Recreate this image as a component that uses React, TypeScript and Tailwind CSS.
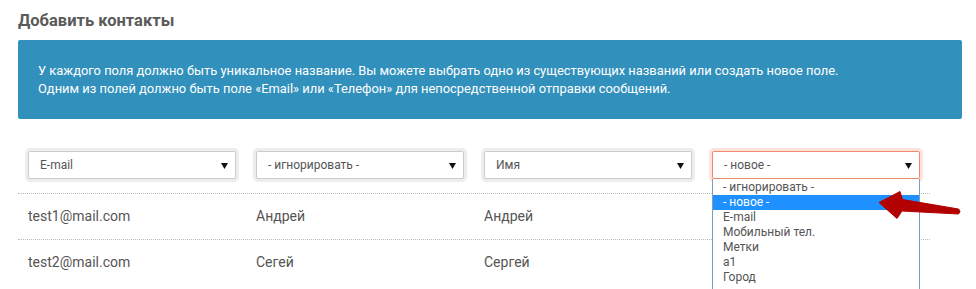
import React from 'react';

const columns = ['E-mail', '- игнорировать -', 'Имя', '- новое -'];

const rows = [
  ['test1@mail.com', 'Андрей', 'Андрей', ''],
  ['test2@mail.com', 'Сегей', 'Сергей', ''],
];

const options = ['- игнорировать -', '- новое -', 'E-mail', 'Мобильный тел.', 'Метки', 'а1', 'Город'];

function Caret() {
  return (
    <svg width="7" height="7" viewBox="0 0 7 7" className="shrink-0">
      <path d="M0 1 L7 1 L3.5 7 Z" fill="#111" />
    </svg>
  );
}

function FakeSelect({ value, active }: { value: string; active?: boolean }) {
  return (
    <div
      className={
        'flex h-[28px] w-[208px] items-center justify-between rounded-[2px] border bg-white pl-[11px] pr-[7px] text-[12px] text-[#555] ' +
        (active
          ? 'border-[#f08a70] shadow-[0_0_0_3px_#fde3db]'
          : 'border-[#c9ccce] shadow-[0_0_0_3px_#ededed]')
      }
    >
      <span>{value}</span>
      <Caret />
    </div>
  );
}

function Arrow() {
  return (
    <svg
      className="absolute left-[870px] top-[185px]"
      width="100"
      height="40"
      viewBox="0 0 100 40"
    >
      <path
        d="M9 17.5 L30 6.5 L32.5 14.5 L88.5 24 Q91.5 26.5 88.5 29 L32 26 L27 33.5 Z"
        fill="#b30000"
        stroke="#b30000"
        strokeWidth="1"
        strokeLinejoin="round"
      />
    </svg>
  );
}

export default function App() {
  return (
    <div
      className="relative h-[289px] w-[976px] overflow-hidden bg-white px-[18px]"
      style={{ fontFamily: 'Roboto, "Noto Sans", sans-serif' }}
    >
      <h2 className="pt-[9px] text-[16.5px] font-bold leading-[24px] text-[#5a5a5a]">Добавить контакты</h2>

      <div className="mt-[7px] h-[79px] w-[944px] rounded-[2px] bg-[#3190bc] px-[20px] pt-[22px] text-[12.9px] leading-[18px] text-white">
        <p>
          У каждого поля должно быть уникальное название. Вы можете выбрать одно из существующих названий или
          создать новое поле.
        </p>
        <p>Одним из полей должно быть поле «Email» или «Телефон» для непосредственной отправки сообщений.</p>
      </div>

      <div className="w-[912px]">
        <div className="grid grid-cols-4 border-b border-dotted border-[#bdbdbd] pb-[14px] pt-[32px]">
          {columns.map((c, i) => (
            <div key={c} className="pl-[10px]">
              <FakeSelect value={c} active={i === 3} />
            </div>
          ))}
        </div>
        {rows.map((r, ri) => (
          <div
            key={ri}
            className={
              'grid h-[46px] grid-cols-4 items-center text-[14px] text-[#555] ' +
              (ri === 0 ? 'border-b border-dotted border-[#bdbdbd]' : '')
            }
          >
            {r.map((cell, ci) => (
              <div key={ci} className="pl-[10px] pb-[1px]">
                {cell}
              </div>
            ))}
          </div>
        ))}
      </div>

      <div className="absolute left-[712px] top-[179px] h-[110px] w-[208px] border-x border-[#7f9db9] bg-white pt-[1px] text-[12px] leading-[15px] text-[#555]">
        {options.map((o, i) => (
          <div key={o} className={'h-[15px] pl-[10px] ' + (i === 1 ? 'bg-[#1e90ff] text-white' : '')}>
            {o}
          </div>
        ))}
      </div>

      <Arrow />
    </div>
  );
}
